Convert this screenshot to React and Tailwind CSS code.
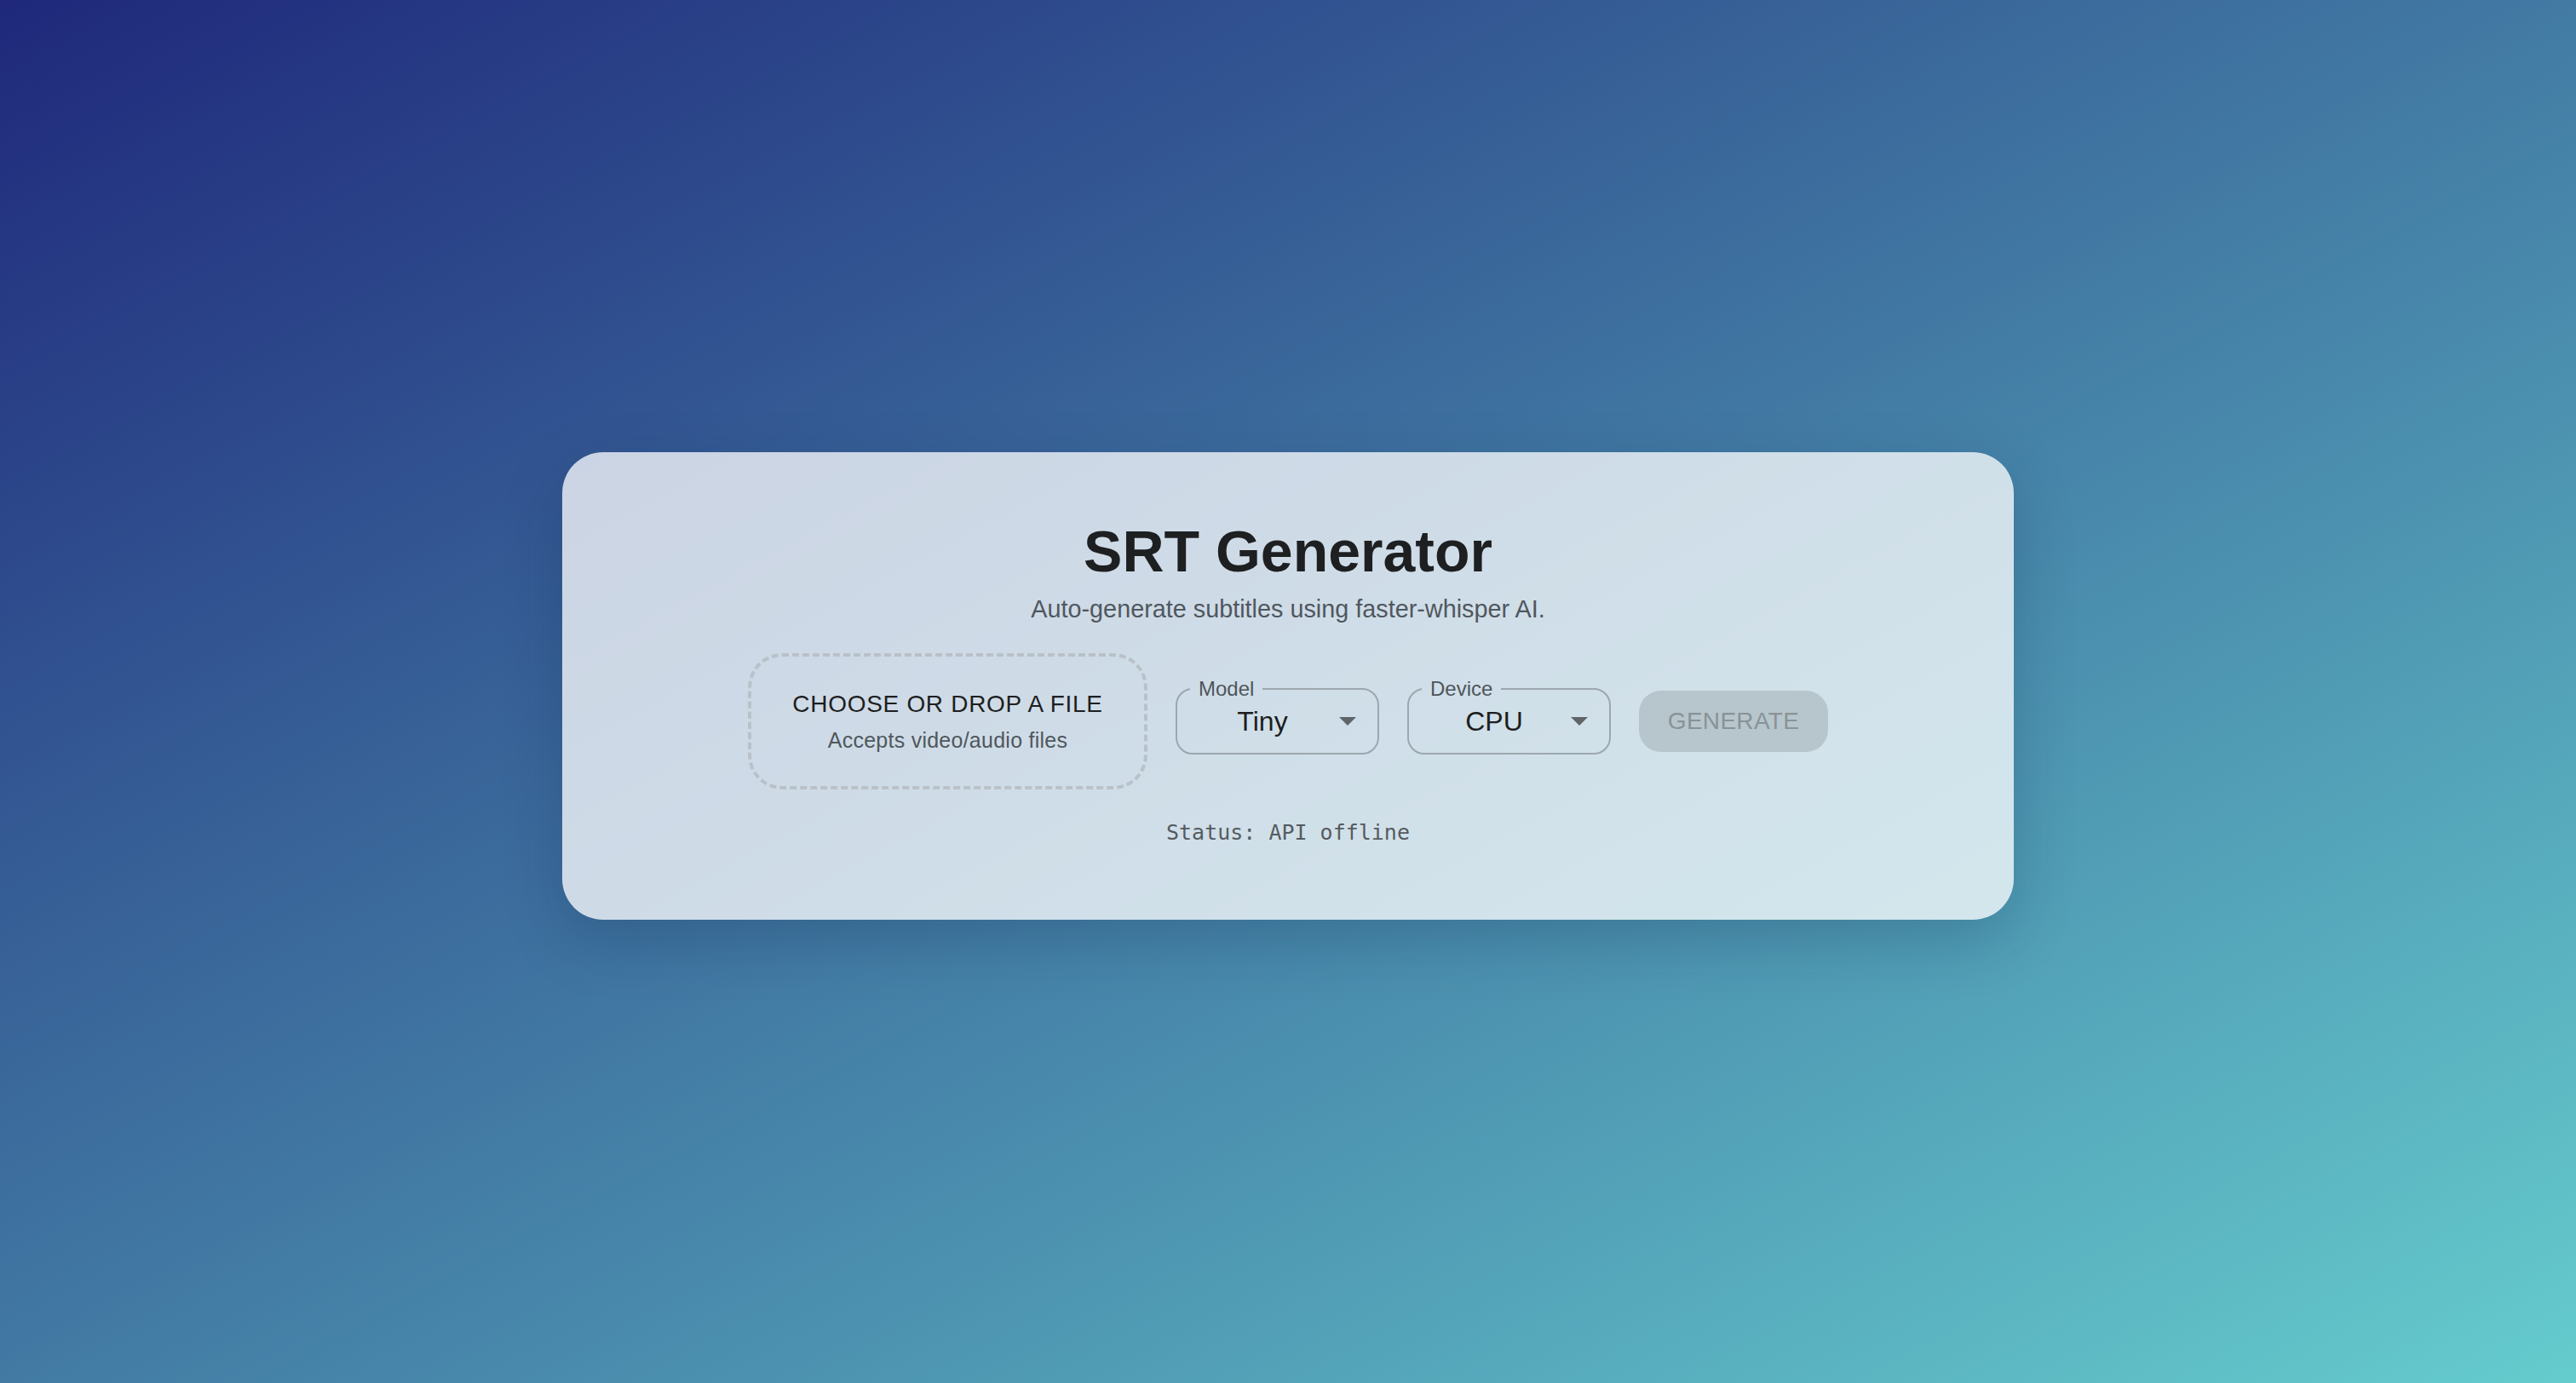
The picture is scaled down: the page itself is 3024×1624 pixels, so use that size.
import React from "react";

function Caret() {
  return (
    <svg width="20" height="10" viewBox="0 0 20 10" className="shrink-0">
      <polygon points="0,0 20,0 10,10" fill="#5f6468" />
    </svg>
  );
}

function SelectBox({ label, value }) {
  return (
    <fieldset className="mb-[11px] w-[239px] rounded-[20px] border-2 border-[#9ca7ae] pb-[11px]">
      <legend className="ml-[15px] px-[10px] text-[24px] leading-[24px] text-[#4f555b]">
        {label}
      </legend>
      <div className="flex h-[52px] items-center pl-[10px] pr-[25px]">
        <span className="flex-1 text-center text-[32px] leading-[40px] text-[#1d1e20]">
          {value}
        </span>
        <Caret />
      </div>
    </fieldset>
  );
}

export default function App() {
  return (
    <div
      className="flex h-screen w-full items-center justify-center pb-[14px] bg-[linear-gradient(to_bottom_right,#1f287b,#65cccd)]"
      style={{ fontFamily: '"Liberation Sans", Arial, sans-serif' }}
    >
      <div className="flex w-[1704px] flex-col items-center rounded-[48px] bg-white/75 pt-[82px] pb-[87px] shadow-[0_24px_70px_rgba(10,30,70,0.22)]">
        <h1 className="text-[68px] font-bold leading-[68px] text-[#1e1f21]">
          SRT Generator
        </h1>
        <p className="mt-[16px] text-[28.8px] leading-[36px] text-[#50575e]">
          Auto-generate subtitles using faster-whisper AI.
        </p>

        <div className="mt-[34px] flex items-center gap-[33px]">
          <div className="flex h-[160px] w-[469px] flex-col items-center justify-center rounded-[40px] border-[4px] border-dashed border-[#b9c1c9]">
            <div className="text-[28px] leading-[34px] tracking-[0.7px] text-[#1e1f21]">
              CHOOSE OR DROP A FILE
            </div>
            <div className="mt-[10px] text-[25px] leading-[30px] tracking-[0.25px] text-[#50575d]">
              Accepts video/audio files
            </div>
          </div>

          <SelectBox label="Model" value="Tiny" />
          <SelectBox label="Device" value="CPU" />

          <button className="flex h-[72px] w-[222px] items-center justify-center rounded-[26px] bg-[#b7c6cc] text-[28px] leading-[34px] tracking-[0.3px] text-[#899397]">
            GENERATE
          </button>
        </div>

        <div
          className="mt-[36px] text-[25px] leading-[30px] text-[#555b60]"
          style={{ fontFamily: '"DejaVu Sans Mono", monospace' }}
        >
          Status: API offline
        </div>
      </div>
    </div>
  );
}
